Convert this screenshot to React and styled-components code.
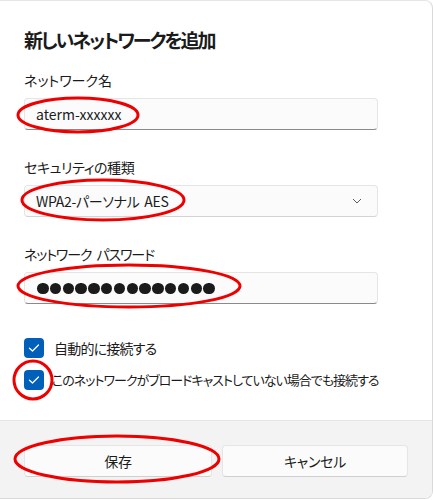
import React from "react";
import styled, { createGlobalStyle } from "styled-components";

const Global = createGlobalStyle`
  html, body { margin: 0; padding: 0; background: #ffffff; }
  body {
    font-family: "Noto Sans CJK JP", "Noto Sans", sans-serif;
    font-feature-settings: "palt";
    color: #1b1b1b;
  }
`;

const Page = styled.div`
  position: relative;
  width: 433px;
  height: 500px;
  overflow: hidden;
`;

const Dialog = styled.div`
  box-sizing: border-box;
  width: 433px;
  height: 499px;
  background: #ffffff;
  border-right: 1px solid #d9d9d9;
  border-top: 1px solid #e6e6e6;
  border-bottom: 1px solid #d9d9d9;
  border-radius: 0 8px 8px 0;
  overflow: hidden;
  display: flex;
  flex-direction: column;
`;

const Body = styled.div`
  padding: 25px 24px 0 24px;
  display: flex;
  flex-direction: column;
  flex: 1;
`;

const Title = styled.h1`
  margin: 0;
  font-size: 19px;
  line-height: 28px;
  font-weight: 600;
  letter-spacing: -2px;
`;

const Label = styled.div`
  font-size: 14px;
  line-height: 20px;
  margin-top: ${(p) => p.$top}px;
  letter-spacing: ${(p) => p.$ls || 0}px;
  word-spacing: ${(p) => p.$ws || 0}px;
  white-space: pre;
`;

const Field = styled.div`
  box-sizing: border-box;
  margin-top: 8px;
  width: 354px;
  height: 32px;
  background: #fbfbfb;
  border: 1px solid #e5e5e5;
  border-bottom-color: ${(p) => (p.$strong ? "#8a8a8a" : "#d4d4d4")};
  border-radius: 4px;
  display: flex;
  align-items: center;
  justify-content: space-between;
  padding: 0 11px;
  font-size: 14px;
  letter-spacing: ${(p) => p.$ls || 0}px;
  word-spacing: 2px;
  white-space: pre;
`;

const Dots = styled.div`
  display: flex;
  gap: 1.3px;
  padding-top: 1px;
  padding-left: 1px;
`;

const Dot = styled.span`
  width: 11.5px;
  height: 11.5px;
  border-radius: 50%;
  background: #1b1b1b;
`;

const Checks = styled.div`
  margin-top: 34px;
  display: flex;
  flex-direction: column;
  gap: 12px;
`;

const CheckRow = styled.label`
  display: flex;
  align-items: center;
  gap: ${(p) => p.$gap}px;
  font-size: ${(p) => p.$size || 14}px;
  line-height: 20px;
  white-space: nowrap;
  letter-spacing: ${(p) => p.$ls || 0}px;
`;

const Box = styled.span`
  width: 20px;
  height: 20px;
  border-radius: 4px;
  background: #005fb8;
  display: flex;
  align-items: center;
  justify-content: center;
  flex-shrink: 0;
`;

const Footer = styled.div`
  margin-top: 30px;
  background: #f3f3f3;
  border-top: 1px solid #e5e5e5;
  padding: 24px 24px 21px 24px;
  display: grid;
  grid-template-columns: 188px 186px;
  gap: 10px;
`;

const Button = styled.button`
  box-sizing: border-box;
  height: 32px;
  background: #fbfbfb;
  border: 1px solid #e5e5e5;
  border-bottom-color: #d0d0d0;
  border-radius: 4px;
  font-family: inherit;
  font-feature-settings: "palt";
  font-size: 14px;
  letter-spacing: -0.3px;
  color: #1b1b1b;
`;

const Marks = styled.svg`
  position: absolute;
  left: 0;
  top: 0;
  pointer-events: none;
`;

const Check = () => (
  <Box>
    <svg width="12" height="10" viewBox="0 0 12 10">
      <path d="M1.5 5.2 L4.5 8 L10.5 2" fill="none" stroke="#fff" strokeWidth="1.3" strokeLinecap="round" strokeLinejoin="round" />
    </svg>
  </Box>
);

export default function App() {
  return (
    <Page>
      <Global />
      <Dialog>
        <Body>
          <Title>新しいネットワークを追加</Title>
          <Label $top={16}>ネットワーク名</Label>
          <Field $strong>aterm-xxxxxx</Field>
          <Label $top={27} $ls={-0.4}>セキュリティの種類</Label>
          <Field $ls={-0.3}>
            <span>WPA2-パーソナル AES</span>
            <svg width="10" height="6" viewBox="0 0 10 6" style={{ marginRight: 4 }}>
              <path d="M1 1 L5 5 L9 1" fill="none" stroke="#5c5c5c" strokeWidth="1" />
            </svg>
          </Field>
          <Label $top={27} $ls={-1.1} $ws={3}>ネットワーク パスワード</Label>
          <Field $strong>
            <Dots>
              {Array.from({ length: 14 }).map((_, i) => (
                <Dot key={i} />
              ))}
            </Dots>
          </Field>
          <Checks>
            <CheckRow $gap={10} $ls={-0.8}>
              <Check />
              自動的に接続する
            </CheckRow>
            <CheckRow $gap={8} $size={13} $ls={-1}>
              <Check />
              このネットワークがブロードキャストしていない場合でも接続する
            </CheckRow>
          </Checks>
        </Body>
        <Footer>
          <Button>保存</Button>
          <Button>キャンセル</Button>
        </Footer>
      </Dialog>
      <Marks width="433" height="500" viewBox="0 0 433 500">
        <g fill="none" stroke="#ee0000" strokeWidth="3">
          <ellipse cx="78" cy="115" rx="60" ry="17" />
          <ellipse cx="103" cy="200" rx="81" ry="20" />
          <ellipse cx="129" cy="286" rx="111" ry="21" />
          <ellipse cx="33" cy="380" rx="19" ry="19" />
          <ellipse cx="117" cy="459" rx="102" ry="23" />
        </g>
      </Marks>
    </Page>
  );
}
